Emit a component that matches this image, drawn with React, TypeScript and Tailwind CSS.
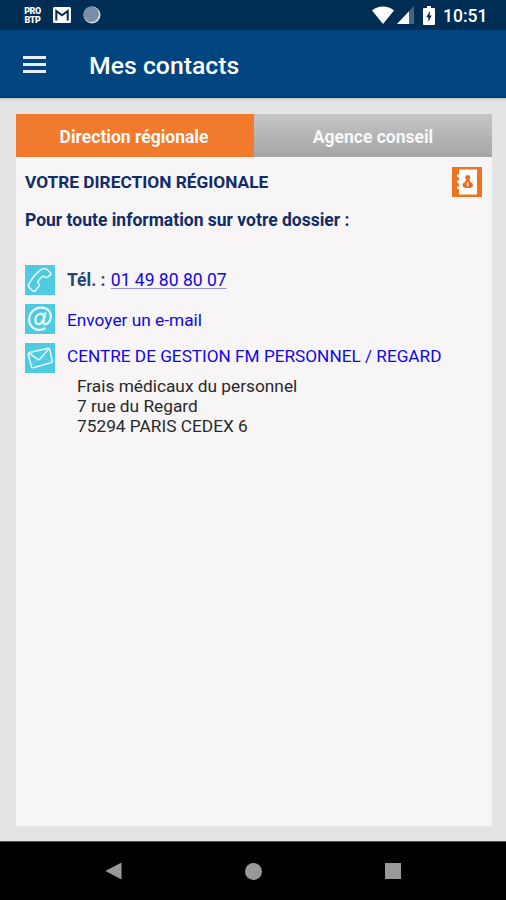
function StatusBar() {
  return (
    <div className="h-[30px] bg-[#002d54] flex items-center text-white">
      <div className="ml-6 mt-px w-[17px] flex flex-col items-center text-[9px] leading-[9px] font-black tracking-[-0.4px]">
        <div>PRO</div>
        <div>BTP</div>
      </div>
      <svg className="ml-3" width="18" height="16" viewBox="0 0 18 16">
        <rect width="18" height="16" rx="1.5" fill="#fff" />
        <path d="M3.3 13.5V4L9 8.2 14.7 4v9.5" fill="none" stroke="#0b2450" strokeWidth="2" />
      </svg>
      <svg className="ml-3" width="18" height="18" viewBox="0 0 18 18">
        <circle cx="9" cy="9" r="8.5" fill="#d5dfe2" />
        <circle cx="8.2" cy="8.2" r="7.7" fill="#7790a8" />
      </svg>
      <svg className="ml-auto" width="22" height="18" viewBox="0 0 22 18">
        <path d="M0 4.5C6-.8 16-.8 22 4.5L11 18z" fill="#fff" />
      </svg>
      <svg className="ml-[3px]" width="17" height="18" viewBox="0 0 17 18">
        <path d="M17 0v18H0z" fill="#426584" />
        <path d="M12 5.3V18H0z" fill="#fff" />
      </svg>
      <svg className="ml-[9px]" width="12" height="19" viewBox="0 0 12 19">
        <path d="M4 0h4v2h3q1 0 1 1v15q0 1-1 1H1q-1 0-1-1V3q0-1 1-1h3z" fill="#fff" />
        <path d="M6.8 5 3.3 11.2H5.4V16L8.7 9.5H6.8z" fill="#002d54" />
      </svg>
      <span className="ml-[8px] mr-[20px] mt-[3px] w-[43px] whitespace-nowrap text-[17.5px] font-medium">10:51</span>
    </div>
  );
}

function Header() {
  return (
    <header className="h-[68px] bg-[#00457f] flex items-center border-b border-[#002f70]">
      <button className="ml-[23px] mt-0.5 flex flex-col gap-[4px]">
        <span className="block w-[23px] h-[3px] bg-[#e7edfa]" />
        <span className="block w-[23px] h-[3px] bg-[#e7edfa]" />
        <span className="block w-[23px] h-[3px] bg-[#e7edfa]" />
      </button>
      <h1 className="ml-[43px] mt-[5px] text-[24.8px] font-medium text-white whitespace-nowrap">Mes contacts</h1>
    </header>
  );
}

function PhoneIcon() {
  return (
    <svg width="30" height="30" viewBox="0 0 30 30" className="block shrink-0">
      <rect width="30" height="30" fill="#4ecbe1" />
      <path d="M15.5 5Q18.5 2.6 22 4.2L25.6 8Q26.4 9.6 24.8 10.5L21.8 12.4Q20.5 12.9 19.4 11.7L18.6 11Q15.5 12.2 12.6 17L14.2 19.3Q15 20.4 13.8 21.5L10.4 25.6Q9.2 26.9 7.7 25.8L3.9 22.2Q2.7 20.8 4.2 18.5Q8.5 10.2 15.5 5Z" fill="none" stroke="#dcf8fb" strokeWidth="1.6" strokeLinejoin="round" />
    </svg>
  );
}

function AtIcon() {
  return (
    <svg width="30" height="30" viewBox="0 0 30 30" className="block shrink-0">
      <rect width="30" height="30" fill="#4ecbe1" />
      <path d="M19.5 24.4C12.5 28.2 4.2 23.5 4.2 15.7C4.2 8.2 10 3.4 16.7 3.6C22.5 3.8 26.4 7.8 25.8 13.2C25.3 17.8 22.4 20.5 20 20.2C18.1 20 18.4 18.2 18.7 16.8L20.2 9.3M19.2 13.8C18.8 10.5 16.7 9.2 14.5 10C11.7 11 10.2 14 10.5 16.8C10.8 20.4 13.8 21 16.3 18.8C18 17.4 18.8 15.7 19.2 13.8" fill="none" stroke="#e3fafc" strokeWidth="2.3" strokeLinecap="round" strokeLinejoin="round" />
    </svg>
  );
}

function MailIcon() {
  return (
    <svg width="30" height="30" viewBox="0 0 30 30" className="block shrink-0">
      <rect width="30" height="30" fill="#4ecbe1" />
      <path d="M4.5 9.5 23 5.4Q24.4 5.2 24.8 6.7L27.2 18Q27.4 19.4 26 19.8L8.2 24.7Q6.8 25 6.4 23.6L3.3 11.2Q3 9.9 4.5 9.5ZM4.5 10.5 12.4 16.2Q14 17.2 15.1 15.7L23.6 6" fill="none" stroke="#dcf8fb" strokeWidth="1.6" strokeLinejoin="round" />
      <path d="m6.8 22.5 4.7-6M25.8 18.5 17.8 14.2" fill="none" stroke="#8fe0ec" strokeWidth="0.6" />
    </svg>
  );
}

function ContactBookIcon() {
  return (
    <svg width="30" height="30" viewBox="0 0 30 30" className="block shrink-0">
      <rect width="30" height="30" fill="#ee731f" />
      <path d="M7 2.5H25V27.5H7V22.5L5 21.5V20L7 19V16.5L5 15.5V14L7 13V10.5L5 9.5V8L7 7Z" fill="#fff" />
      <circle cx="15.7" cy="10.5" r="2.5" fill="#e86b25" />
      <path d="M13.8 13H17.6L18.5 15Q21 16 21 18.2Q21 21 15.8 21Q10.5 21 10.5 18.2Q10.5 16 13 15Z" fill="#e86b25" />
      <path d="m15.7 14 1.3 3-.7 2.5h-1.2l-.7-2.5z" fill="#f9cdb1" />
    </svg>
  );
}

function NavBar() {
  return (
    <nav className="h-[59px] mt-auto bg-black border-t border-[#555] flex items-center text-[#999]">
      <svg className="ml-[105px]" width="17" height="18" viewBox="0 0 17 18">
        <path d="M16.5.5V17.5L.5 9z" fill="currentColor" />
      </svg>
      <span className="ml-[123px] w-[17px] h-[17px] rounded-full bg-[#999]" />
      <span className="ml-[123px] w-4 h-4 bg-[#999]" />
    </nav>
  );
}

export default function App() {
  return (
    <div className="w-[506px] h-[900px] flex flex-col overflow-hidden bg-[#e4e4e4] font-[Roboto,sans-serif]">
      <StatusBar />
      <Header />
      <div className="h-1 shrink-0 bg-linear-to-b from-[#c9cbcb] to-[#e4e4e4]" />

      <main className="ml-4 mt-3 w-[476px] h-[712px] bg-[#f7f5f6]">
        <div className="flex h-[43px] text-[17.5px] font-bold text-[#f8f8f8] whitespace-nowrap">
          <button className="w-1/2 pt-[3px] pr-0.5 bg-[#f27a2d]">Direction régionale</button>
          <button className="w-1/2 pt-[3px] bg-linear-to-b from-[#c6c6c6] to-[#a5a5a5]">Agence conseil</button>
        </div>

        <div className="pl-[9px] pr-2.5 pt-2.5 text-[17.2px] whitespace-nowrap">
          <div className="flex items-center justify-between h-[30px] font-bold text-[#112c69]">
            <h2 className="pt-[2px] text-[17.3px]">VOTRE DIRECTION RÉGIONALE</h2>
            <ContactBookIcon />
          </div>
          <p className="mt-[11px] leading-[25px] text-[17.5px] font-bold text-[#112c69]">Pour toute information sur votre dossier :</p>

          <div className="mt-[32px] flex items-center gap-3">
            <PhoneIcon />
            <p className="pt-px">
              <span className="font-bold text-[17.5px] text-[#244574]">Tél. : </span>
              <a className="ml-px text-[17.5px] text-[#1008e6] underline decoration-1 underline-offset-2 decoration-[#9994df]">01 49 80 80 07</a>
            </p>
          </div>
          <div className="mt-[9px] flex items-center gap-3">
            <AtIcon />
            <a className="pt-[3px] text-[17.3px] text-[#1008e6]">Envoyer un e-mail</a>
          </div>
          <div className="mt-[9px] flex gap-3">
            <MailIcon />
            <a className="pt-px text-[#1008e6] leading-[25px]">CENTRE DE GESTION FM PERSONNEL / REGARD</a>
          </div>
          <address className="ml-[52px] mt-[3px] not-italic leading-5 text-[17.3px] text-[#292929]">
            Frais médicaux du personnel<br />
            7 rue du Regard<br />
            75294 PARIS CEDEX 6
          </address>
        </div>
      </main>
      <NavBar />
    </div>
  );
}
